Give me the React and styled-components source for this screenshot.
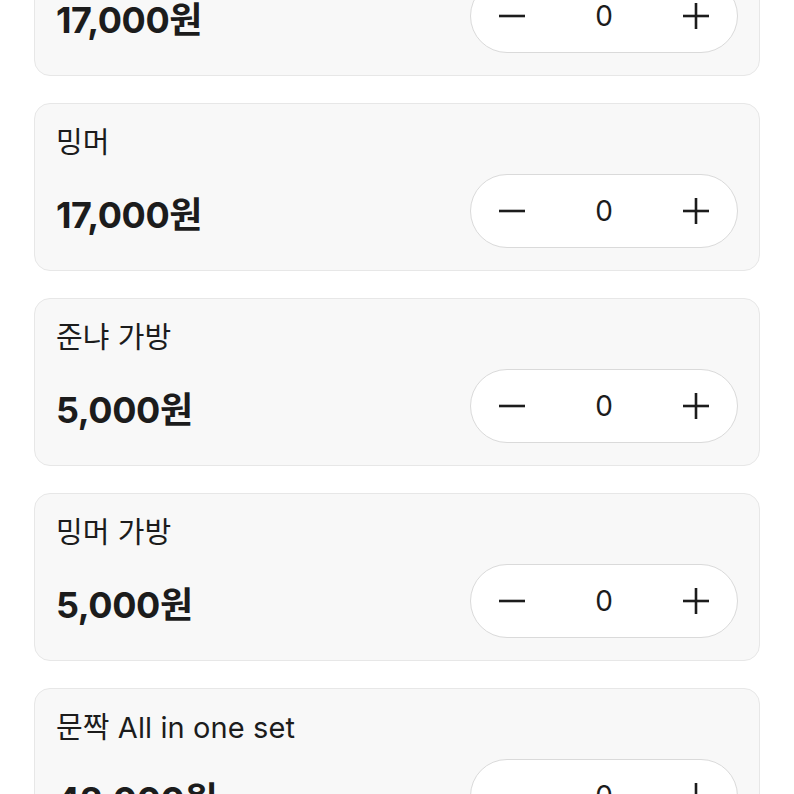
import React from "react";
import styled, { createGlobalStyle } from "styled-components";

const GlobalStyle = createGlobalStyle`
    html, body {
        margin: 0;
        padding: 0;
        background: #ffffff;
        font-family: Inter, "Noto Sans CJK KR", sans-serif;
        color: #1c1c1c;
    }
`;

const Viewport = styled.div`
    height: 794px;
    overflow: hidden;
`;

const List = styled.div`
    display: flex;
    flex-direction: column;
    gap: 27px;
    padding: 0 34px;
    margin-top: -92px;
`;

const Card = styled.div`
    flex-shrink: 0;
    box-sizing: border-box;
    height: 168px;
    background: #f8f8f8;
    border: 1px solid #e7e7e7;
    border-radius: 16px;
    padding: 20px 21px;
    display: flex;
    flex-direction: column;
    gap: 12px;
`;

const Name = styled.div`
    font-size: 29px;
    line-height: 38px;
    font-weight: 400;
    letter-spacing: 0.1px;
`;

const Row = styled.div`
    display: flex;
    justify-content: space-between;
    align-items: center;
`;

const Price = styled.div`
    font-size: 36px;
    font-weight: 700;
    letter-spacing: -0.4px;
    padding-top: 2px;
`;

const Stepper = styled.div`
    box-sizing: border-box;
    width: 268px;
    height: 74px;
    border: 1px solid #dadada;
    border-radius: 37px;
    background: #ffffff;
    display: flex;
    align-items: center;
    justify-content: space-between;
    padding: 0 26px;
`;

const StepButton = styled.button`
    border: none;
    background: transparent;
    padding: 0;
    width: 30px;
    height: 30px;
    display: flex;
    align-items: center;
    justify-content: center;
    color: #1c1c1c;
`;

const Count = styled.span`
    font-size: 28px;
    font-weight: 400;
`;

const Minus = () => (
    <svg width="28" height="28" viewBox="0 0 28 28">
        <line x1="1" y1="14" x2="27" y2="14" stroke="currentColor" strokeWidth="2.6" />
    </svg>
);

const Plus = () => (
    <svg width="28" height="28" viewBox="0 0 28 28">
        <line x1="1" y1="14" x2="27" y2="14" stroke="currentColor" strokeWidth="2.6" />
        <line x1="14" y1="1" x2="14" y2="27" stroke="currentColor" strokeWidth="2.6" />
    </svg>
);

const items = [
    { name: "밍머 세트", price: "17,000원" },
    { name: "밍머", price: "17,000원" },
    { name: "준냐 가방", price: "5,000원" },
    { name: "밍머 가방", price: "5,000원" },
    { name: "문짝 All in one set", price: "42,000원" },
];

const App = () => {
    return (
        <>
            <GlobalStyle />
            <Viewport>
                <List>
                    {items.map((item, i) => (
                        <Card key={i}>
                            <Name>{item.name}</Name>
                            <Row>
                                <Price>{item.price}</Price>
                                <Stepper>
                                    <StepButton>
                                        <Minus />
                                    </StepButton>
                                    <Count>0</Count>
                                    <StepButton>
                                        <Plus />
                                    </StepButton>
                                </Stepper>
                            </Row>
                        </Card>
                    ))}
                </List>
            </Viewport>
        </>
    );
};

export default App;
